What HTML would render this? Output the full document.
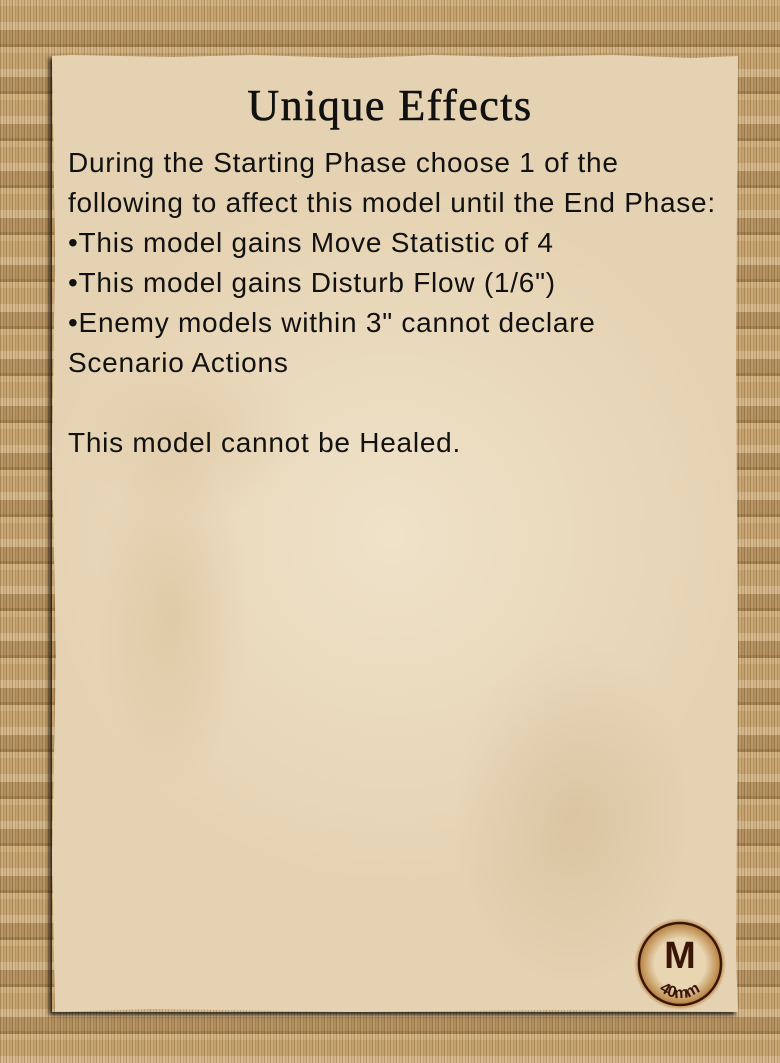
<!DOCTYPE html>
<html><head><meta charset="utf-8">
<style>
html,body{margin:0;padding:0;}
body{width:780px;height:1063px;overflow:hidden;position:relative;
background:
 repeating-linear-gradient(90deg, rgba(110,75,30,.25) 0 1px, rgba(255,245,220,.18) 1px 3px, rgba(140,100,50,.18) 3px 4px, rgba(240,215,170,.12) 4px 6px),
 repeating-linear-gradient(180deg, #c9a877 0 6px, #bd9a66 6px 22px, #cdb083 22px 30px, #a98553 30px 44px, #94723f 44px 47px);
}
.paper{position:absolute;left:52px;top:55px;width:686px;height:957px;
background:
 radial-gradient(ellipse 110px 250px at 120px 560px, rgba(190,150,90,.2), transparent 70%),
 radial-gradient(ellipse 160px 120px at 140px 380px, rgba(190,150,90,.15), transparent 70%),
 radial-gradient(ellipse 170px 250px at 520px 760px, rgba(175,140,95,.2), transparent 70%),
 radial-gradient(ellipse 420px 420px at 340px 480px, #efe2c9, #e5d2b2 85%);
clip-path:polygon(0 1px,20px 0,120px 2px,200px 0,300px 3px,360px 1px,380px 0,460px 2px,560px 0,640px 3px,686px 1px,684px 300px,686px 600px,684px 900px,686px 957px,500px 955px,300px 957px,100px 954px,3px 957px,0 800px,4px 600px,0 400px,3px 200px);
}
.shadow{position:absolute;left:52px;top:55px;width:686px;height:957px;box-shadow:-3px 3px 4px rgba(20,15,10,.85);}
.title{position:absolute;left:0;width:780px;top:80px;text-align:center;
font-family:"Liberation Serif",serif;font-size:44px;color:#111;letter-spacing:1.5px;-webkit-text-stroke:0.6px #111;}
.body{position:absolute;left:68px;top:143px;font-family:"Liberation Sans",sans-serif;font-size:28px;letter-spacing:.75px;line-height:40px;color:#111;}
.body div{white-space:nowrap;height:40px;}
</style></head><body>
<div class="shadow"></div>
<div class="paper"></div>
<div class="title">Unique Effects</div>
<div class="body">
<div>During the Starting Phase choose 1 of the</div>
<div>following to affect this model until the End Phase:</div>
<div>•This model gains Move Statistic of 4</div>
<div>•This model gains Disturb Flow (1/6")</div>
<div>•Enemy models within 3" cannot declare</div>
<div>Scenario Actions</div>
<div></div>
<div>This model cannot be Healed.</div>
</div>
<svg style="position:absolute;left:630px;top:914px" width="100" height="100" viewBox="0 0 100 100">
<defs><radialGradient id="g"><stop offset="55%" stop-color="#e8d5b2"/><stop offset="88%" stop-color="#b8823f"/><stop offset="100%" stop-color="rgba(184,130,63,0)"/></radialGradient>
<path id="arc" d="M14,52 A36,36 0 0 0 86,52"/></defs>
<circle cx="50" cy="50" r="46" fill="url(#g)"/>
<circle cx="50" cy="50" r="41" fill="none" stroke="#3a1608" stroke-width="2.5"/>
<text x="50" y="54" text-anchor="middle" font-family="Liberation Sans,sans-serif" font-size="38" font-weight="bold" fill="#3a1608">M</text>
<text font-family="Liberation Sans,sans-serif" font-size="16" font-weight="bold" letter-spacing="1" fill="#3a1608" dy="-4"><textPath href="#arc" startOffset="50%" text-anchor="middle">40mm</textPath></text>
</svg>
</body></html>
